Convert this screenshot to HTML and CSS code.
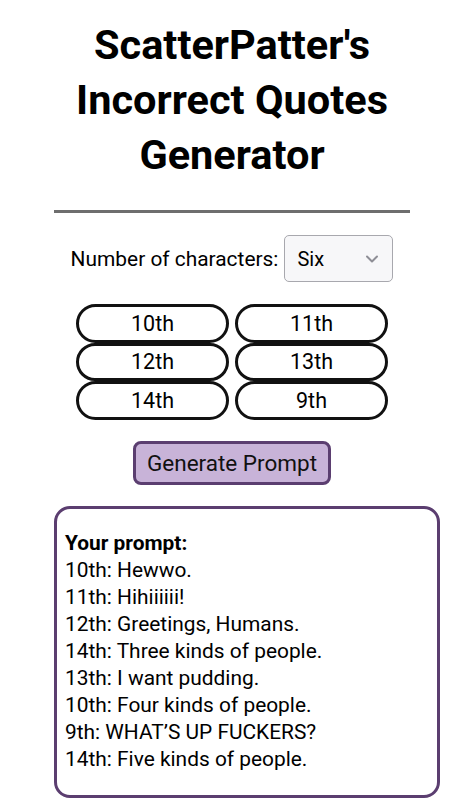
FILE: index.html
```html
<!DOCTYPE html>
<html>
<head>
<meta charset="utf-8">
<link rel="stylesheet" href="styles.css">
</head>
<body>
<div class="page">
  <h1 class="title">ScatterPatter's<br>Incorrect Quotes<br>Generator</h1>
  <div class="rule"></div>
  <div class="count-row">
    <label class="count-label">Number of characters:</label>
    <div class="select">
      <span>Six</span>
      <svg class="chev" width="14" height="10" viewBox="0 0 14 10"><path d="M2 2.5 L7 7.5 L12 2.5" fill="none" stroke="#8e8e96" stroke-width="2" stroke-linecap="round" stroke-linejoin="round"/></svg>
    </div>
  </div>
  <div class="chars">
    <div class="pill">10th</div>
    <div class="pill">11th</div>
    <div class="pill">12th</div>
    <div class="pill">13th</div>
    <div class="pill">14th</div>
    <div class="pill">9th</div>
  </div>
  <div class="gen-wrap"><button class="gen">Generate Prompt</button></div>
  <div class="output">
    <p class="prompt"><b>Your prompt:</b><br>10th: Hewwo.<br>11th: Hihiiiiii!<br>12th: Greetings, Humans.<br>14th: Three kinds of people.<br>13th: I want pudding.<br>10th: Four kinds of people.<br>9th: WHAT’S UP FUCKERS?<br>14th: Five kinds of people.</p>
  </div>
</div>
</body>
</html>
```
FILE: styles.css
```css
html, body { margin: 0; padding: 0; background: #fff; }
body { font-family: Roboto, "Noto Sans", sans-serif; color: #000; }
.page { width: 464px; display: flex; flex-direction: column; align-items: center; padding-top: 17px; }
.title { margin: 0; font-size: 41.5px; line-height: 55px; font-weight: 700; text-align: center; }
.rule { width: 356px; height: 3px; background: #6e6e6e; margin-top: 28px; }
.count-row { display: flex; align-items: center; gap: 6px; margin-top: 22px; }
.count-label { font-size: 20.9px; }
.select { box-sizing: border-box; width: 109px; height: 47px; border: 1.5px solid #a8a8ae; border-radius: 5px; background: #f7f7f9; display: flex; align-items: center; justify-content: space-between; padding: 0 13px 0 12px; font-size: 20px; }
.chars { display: grid; grid-template-columns: 153px 153px; column-gap: 6px; row-gap: 0; margin-top: 22px; }
.pill { box-sizing: border-box; height: 38.5px; border: 3px solid #111; border-radius: 20px; display: flex; align-items: center; justify-content: center; font-size: 21.5px; }
.gen-wrap { margin-top: 21px; }
.gen { box-sizing: border-box; width: 198px; height: 44px; background: #c8b3d8; border: 3px solid #5b3e70; border-radius: 8px; font-family: Roboto, sans-serif; font-size: 22.5px; color: #111; padding: 0; }
.output { box-sizing: border-box; align-self: flex-start; margin-left: 54px; width: 386px; height: 292px; margin-top: 21px; border: 3px solid #5b3e70; border-radius: 16px; padding: 0 8px; }
.prompt { margin: 21px 0; font-size: 20.9px; line-height: 27.1px; }
```
